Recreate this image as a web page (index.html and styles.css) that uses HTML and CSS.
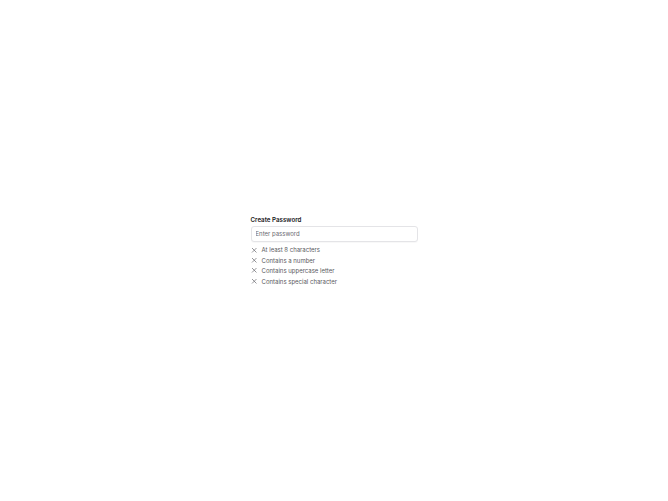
FILE: index.html
```html
<!DOCTYPE html>
<html>
<head>
<meta charset="utf-8">
<link rel="stylesheet" href="styles.css">
</head>
<body>
<div class="page">
  <div class="field">
    <label class="label">Create Password</label>
    <input class="input" type="password" placeholder="Enter password">
    <ul class="rules">
      <li class="rule"><svg class="x" viewBox="0 0 10 10"><path d="M2 2L8 8M8 2L2 8"/></svg><span>At least 8 characters</span></li>
      <li class="rule"><svg class="x" viewBox="0 0 10 10"><path d="M2 2L8 8M8 2L2 8"/></svg><span>Contains a number</span></li>
      <li class="rule"><svg class="x" viewBox="0 0 10 10"><path d="M2 2L8 8M8 2L2 8"/></svg><span>Contains uppercase letter</span></li>
      <li class="rule"><svg class="x" viewBox="0 0 10 10"><path d="M2 2L8 8M8 2L2 8"/></svg><span>Contains special character</span></li>
    </ul>
  </div>
</div>
</body>
</html>
```
FILE: styles.css
```css
html, body { margin: 0; padding: 0; background: #ffffff; }
body { font-family: Inter, "Liberation Sans", sans-serif; }
.page {
  min-height: 100vh;
  display: flex;
  align-items: center;
  justify-content: center;
}
.field {
  width: 167px;
  display: flex;
  flex-direction: column;
}
.label {
  font-size: 6.2px;
  font-weight: 600;
  color: #18181b;
  line-height: 10px;
  margin-bottom: 1px;
}
.input {
  box-sizing: border-box;
  width: 167px;
  height: 16px;
  border: 1px solid #e4e4e7;
  border-radius: 3px;
  padding: 0 4px;
  font-family: inherit;
  font-size: 6px;
  color: #333;
  background: #fff;
  outline: none;
  box-shadow: 0 1px 1px rgba(0,0,0,0.03);
}
.input::placeholder { color: #6b6b70; }
.rules {
  list-style: none;
  margin: 3px 0 0;
  padding: 0;
  display: flex;
  flex-direction: column;
}
.rule {
  display: flex;
  align-items: center;
  gap: 4.5px;
  height: 10.4px;
  font-size: 6px;
  color: #5a5a60;
}
.x {
  width: 6.5px;
  height: 6.5px;
  fill: none;
  stroke: #6b6b70;
  stroke-width: 1.1;
  stroke-linecap: round;
}
```
